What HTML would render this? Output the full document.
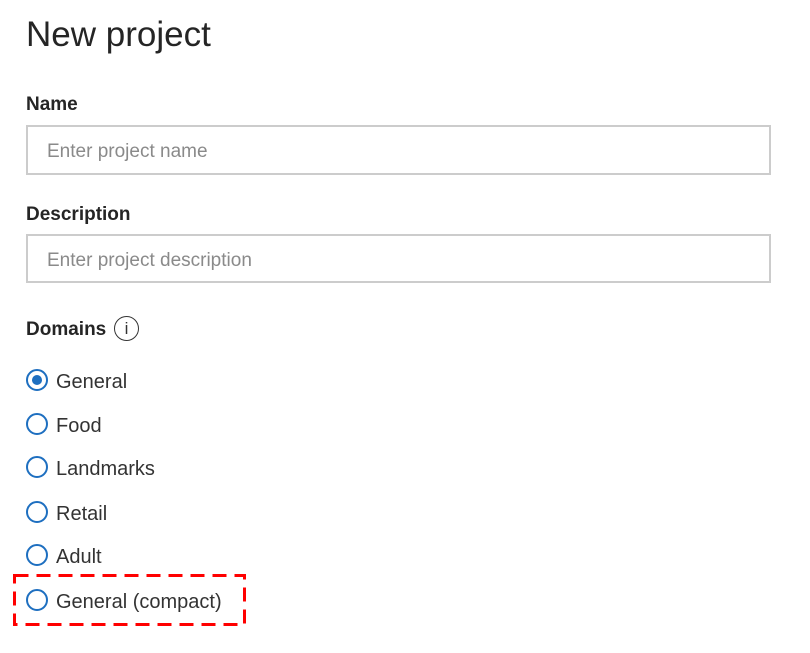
<!DOCTYPE html>
<html><head><style>
body{margin:0;width:810px;height:653px;background:#fff;font-family:"Liberation Sans",sans-serif;color:#333;position:relative;overflow:hidden}
.a{position:absolute;white-space:nowrap}
.t{left:26px;top:15px;font-size:35px;color:#252525}
.l{left:26px;font-size:19px;font-weight:bold;color:#252525}
.in{position:absolute;left:26px;width:742px;height:46px;border:2px solid #ccc;box-sizing:content-box}
.in span{position:absolute;left:19px;top:14px;font-size:19px;color:#8a8a8a}
.r{position:absolute;left:26px;width:18px;height:18px;border:2px solid #1e6fc0;border-radius:50%}
.rl{left:56px;font-size:20px;color:#333}
</style></head><body>
<div class="a t">New project</div>
<div class="a l" style="top:94px">Name</div>
<div class="in" style="top:125px;height:46px;width:741px"><span>Enter project name</span></div>
<div class="a l" style="top:204px">Description</div>
<div class="in" style="top:234px;height:45px;width:741px"><span>Enter project description</span></div>
<div class="a l" style="top:319px">Domains</div>
<div style="position:absolute;left:114px;top:316px;width:23px;height:23px;border:1.5px solid #333;border-radius:50%;font-size:17px;text-align:center;line-height:23px">i</div>
<div class="r" style="top:369px"><div style="position:absolute;left:4px;top:4px;width:10px;height:10px;border-radius:50%;background:#1e6fc0"></div></div>
<div class="a rl" style="top:371px">General</div>
<div class="r" style="top:413px"></div><div class="a rl" style="top:415px">Food</div>
<div class="r" style="top:456px"></div><div class="a rl" style="top:458px">Landmarks</div>
<div class="r" style="top:501px"></div><div class="a rl" style="top:503px">Retail</div>
<div class="r" style="top:544px"></div><div class="a rl" style="top:546px">Adult</div>
<div class="r" style="top:589px"></div><div class="a rl" style="top:591px">General (compact)</div>
<svg style="position:absolute;left:0;top:0" width="810" height="653"><rect x="14.5" y="575.5" width="230" height="49" fill="none" stroke="#f00" stroke-width="3" stroke-dasharray="14,8"/></svg>
</body></html>
